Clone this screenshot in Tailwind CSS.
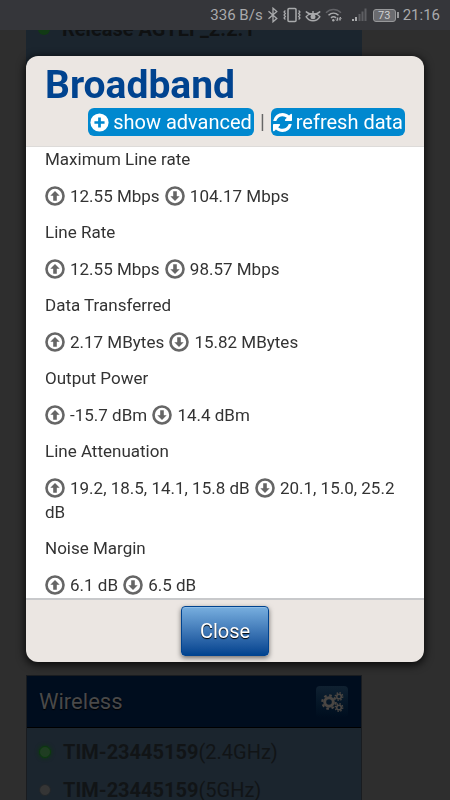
<!DOCTYPE html>
<html lang="en">
<head>
<meta charset="utf-8">
<meta name="viewport" content="width=device-width, initial-scale=1">
<title>Broadband</title>
<script src="https://cdn.jsdelivr.net/npm/@tailwindcss/browser@4"></script>
</head>
<body class="h-screen overflow-hidden bg-[#2e2e2e] font-['Roboto',sans-serif]">

<svg class="hidden" aria-hidden="true">
  <symbol id="up" viewBox="0 0 20 20">
    <circle cx="10" cy="10" r="8.5" fill="none" stroke="#666" stroke-width="2.6"/>
    <path d="M10 5l4.7 4.8h-2.9v5H8.2v-5H5.3z" fill="#666"/>
  </symbol>
  <symbol id="down" viewBox="0 0 20 20">
    <circle cx="10" cy="10" r="8.5" fill="none" stroke="#666" stroke-width="2.6"/>
    <path d="M10 15l4.7-4.8h-2.9v-5H8.2v5H5.3z" fill="#666"/>
  </symbol>
</svg>

<div class="flex h-full flex-col">
  <!-- status bar -->
  <header class="flex h-[30px] shrink-0 items-center justify-end bg-[#35363a] pr-2.5 text-[15px] text-[#a9aaac]">
    <span>336 B/s</span>
    <svg class="ml-1 h-4 w-3" viewBox="0 0 12 16" fill="none" stroke="#a9aaac" stroke-width="1.3"><path d="M1.5 4.3l8.3 7.2L6 14.8V1.2l3.8 3.3-8.3 7.2"/></svg>
    <svg class="ml-1 h-4 w-[18px]" viewBox="0 0 18 16" fill="none" stroke="#a9aaac" stroke-width="1.5"><rect x="5" y="1.500" width="8" height="13" rx="1"/><path d="M2.4 3.5L1 5l1.400 1.500L1 8l1.400 1.500L1 11l1.400 1.500M15.600 3.500L17 5l-1.400 1.500L17 8l-1.400 1.500L17 11l-1.400 1.500" stroke-width="1.2"/></svg>
    <svg class="ml-1 h-4 w-4" viewBox="0 0 16 16" fill="none" stroke="#a9aaac" stroke-width="1.400"><path d="M.8 4.500c3.500 3.600 10.900 3.600 14.400 0"/><path d="M1.200 9.800C4.500 5.600 11.500 5.600 14.800 9.800 11.500 15 4.500 15 1.200 9.800z"/><circle cx="8" cy="9.800" r="2.500" fill="#a9aaac" stroke="none"/><path d="M8 4v3"/></svg>
    <svg class="ml-1 h-4 w-[18px]" viewBox="0 0 18 16" fill="none" stroke-width="1.500"><path d="M1 5.700c4.500-4.200 10.500-4.200 15 0" stroke="#626367"/><path d="M3.500 8.300c3-2.700 7-2.700 10 0M6 10.900c1.600-1.400 3.400-1.400 5 0" stroke="#a9aaac"/><circle cx="8.300" cy="13.200" r="1.200" fill="#a9aaac" stroke="none"/><path d="M12.500 10.500v3M15 10.500v3" stroke="#a9aaac"/><path d="M11 12.500l1.500 1.600M16.500 11.500L15 10" stroke="#a9aaac" stroke-width="1"/></svg>
    <svg class="ml-2 h-4 w-4" viewBox="0 0 16 16"><path d="M1 12h2v2H1zM4 10h2v4H4z" fill="#a9aaac"/><path d="M7.500 7h2v7h-2zM10.500 4.500h2V14h-2zM13.500 1.500h2V14h-2z" fill="#5e5f63"/></svg>
    <span class="ml-1.5 flex h-[13px] w-[23px] items-center justify-center rounded-[3px] border border-[#97989a] bg-[#6a6b6f] text-[11px] leading-none text-[#d0d0d1]">73</span>
    <span class="ml-px h-1.5 w-0.5 bg-[#97989a]"></span>
    <span class="ml-1">21:16</span>
  </header>

  <!-- dimmed page -->
  <main class="flex min-h-0 grow flex-col px-[26px]" aria-hidden="true">
    <section class="h-[600px] w-[336px] shrink-0 overflow-hidden bg-[#1b252e]">
      <p class="-mt-[13px] flex items-center pl-3 text-xl leading-6 font-bold text-[#0f1112]"><span class="mr-3 size-3 rounded-full bg-[#113a14]"></span>Release AGTEF_2.2.1</p>
    </section>
    <section class="mt-[45px] w-[336px] shrink-0 border border-[#191c20] bg-[#1b252e]">
      <div class="flex h-[52px] items-center justify-between border-b border-black bg-[#000d1e] pr-[13px] pl-3">
        <h2 class="text-[22px] leading-7 text-[#49494a] text-shadow-[0_1px_1px_#000]">Wireless</h2>
        <span class="flex size-8 items-center justify-center rounded-sm bg-linear-to-b from-[#102131] to-[#000d1e]">
          <svg class="size-6" viewBox="0 0 24 24" fill="none" stroke="#4a4643">
            <circle cx="9" cy="12" r="4.300" stroke-width="3"/><circle cx="9" cy="12" r="6.700" stroke-width="2.200" stroke-dasharray="2.630"/>
            <circle cx="19" cy="6.500" r="2.300" stroke-width="1.600"/><circle cx="19" cy="6.500" r="3.700" stroke-width="1.500" stroke-dasharray="1.453"/>
            <circle cx="19" cy="17.500" r="2.300" stroke-width="1.600"/><circle cx="19" cy="17.500" r="3.700" stroke-width="1.500" stroke-dasharray="1.453"/>
          </svg>
        </span>
      </div>
      <ul class="flex flex-col gap-3.5 py-3 pl-3 text-xl leading-6 text-[#111416]">
        <li class="flex items-center"><span class="mr-3 size-3 rounded-full border border-[#0b3a0d] bg-[#1f3d22] shadow-[0_0_4px_#0b3a0d]"></span><span><b>TIM-23445159</b>(2.4GHz)</span></li>
        <li class="flex items-center"><span class="mr-3 size-3 rounded-full border border-[#22262a] bg-[#353535]"></span><span><b>TIM-23445159</b>(5GHz)</span></li>
      </ul>
    </section>
  </main>
</div>

<!-- dialog -->
<div class="fixed inset-x-0 top-14 px-[26px]">
  <div role="dialog" aria-labelledby="title" class="flex flex-col overflow-hidden rounded-xl bg-[#ebe6e2] shadow-[0_2px_8px_1px_#000c]">
    <div class="border-b border-[#dddbd9] px-[19px] pt-1.5 pb-2.5">
      <h1 id="title" class="text-[39px] leading-[46px] font-bold text-[#00438f]">Broadband</h1>
      <div class="flex items-center justify-end gap-1.5 text-xl leading-7 text-[#666]">
        <button type="button" class="flex items-center gap-1 rounded-md bg-[#0088cf] px-0.5 text-white">
          <svg class="size-[19px]" viewBox="0 0 18 18"><circle cx="9" cy="9" r="8.600" fill="#fff"/><path d="M9 4.200v9.600M4.200 9h9.600" stroke="#0088cf" stroke-width="2.600"/></svg>
          show advanced
        </button>
        <span>|</span>
        <button type="button" class="flex items-center gap-1 rounded-md bg-[#0088cf] px-0.5 text-white">
          <svg class="size-[19px]" viewBox="0 0 1536 1536" fill="#fff"><path d="M1511 928q0 5-1 7-64 268-268 434.500t-478 166.500q-146 0-282.500-55t-243.500-157l-129 129q-19 19-45 19t-45-19-19-45v-448q0-26 19-45t45-19h448q26 0 45 19t19 45-19 45l-137 137q71 66 161 102t187 36q134 0 250-65t186-179q11-17 53-117 8-23 30-23h192q13 0 22.500 9.500t9.500 22.500zm25-800v448q0 26-19 45t-45 19h-448q-26 0-45-19t-19-45 19-45l138-138q-148-137-349-137-134 0-250 65t-186 179q-11 17-53 117-8 23-30 23h-199q-13 0-22.500-9.500t-9.500-22.500v-7q65-268 270-434.500t480-166.500q146 0 284 55.500t245 156.500l130-129q19-19 45-19t45 19 19 45z"/></svg>
          refresh data
        </button>
      </div>
    </div>
    <dl class="bg-white px-[19px] pb-px text-[17px] leading-6 text-[#333]">
      <dt class="mb-[13px]">Maximum Line rate</dt>
      <dd class="mb-3"><svg class="mr-[5px] inline size-5 align-[-4px]"><use href="#up"/></svg>12.55 Mbps <svg class="mx-[5px] ml-px inline size-5 align-[-4px]"><use href="#down"/></svg>104.17 Mbps</dd>
      <dt class="mb-[13px]">Line Rate</dt>
      <dd class="mb-3"><svg class="mr-[5px] inline size-5 align-[-4px]"><use href="#up"/></svg>12.55 Mbps <svg class="mr-[5px] ml-px inline size-5 align-[-4px]"><use href="#down"/></svg>98.57 Mbps</dd>
      <dt class="mb-[13px]">Data Transferred</dt>
      <dd class="mb-3"><svg class="mr-[5px] inline size-5 align-[-4px]"><use href="#up"/></svg>2.17 MBytes <svg class="mr-[5px] ml-px inline size-5 align-[-4px]"><use href="#down"/></svg>15.82 MBytes</dd>
      <dt class="mb-[13px]">Output Power</dt>
      <dd class="mb-3"><svg class="mr-[5px] inline size-5 align-[-4px]"><use href="#up"/></svg>-15.7 dBm <svg class="mr-[5px] ml-px inline size-5 align-[-4px]"><use href="#down"/></svg>14.4 dBm</dd>
      <dt class="mb-[13px]">Line Attenuation</dt>
      <dd class="mb-3"><svg class="mr-[5px] inline size-5 align-[-4px]"><use href="#up"/></svg>19.2, 18.5, 14.1, 15.8 dB <svg class="mr-[5px] ml-px inline size-5 align-[-4px]"><use href="#down"/></svg>20.1, 15.0, 25.2 dB</dd>
      <dt class="mb-[13px]">Noise Margin</dt>
      <dd><svg class="mr-[5px] inline size-5 align-[-4px]"><use href="#up"/></svg>6.1 dB <svg class="mr-[5px] ml-px inline size-5 align-[-4px]"><use href="#down"/></svg>6.5 dB</dd>
    </dl>
    <div class="flex justify-center border-t-2 border-[#c8c9cb] px-[19px] py-1.5">
      <button type="button" class="rounded border border-[#00438f] bg-linear-to-b from-[#78afdf] to-[#00438f] px-[18px] py-2.5 text-xl leading-7 text-white shadow-[0_2px_5px_#0008,inset_0_1px_0_#8fbde5] text-shadow-[0_1px_1px_#000]">Close</button>
    </div>
  </div>
</div>
</body>
</html>
